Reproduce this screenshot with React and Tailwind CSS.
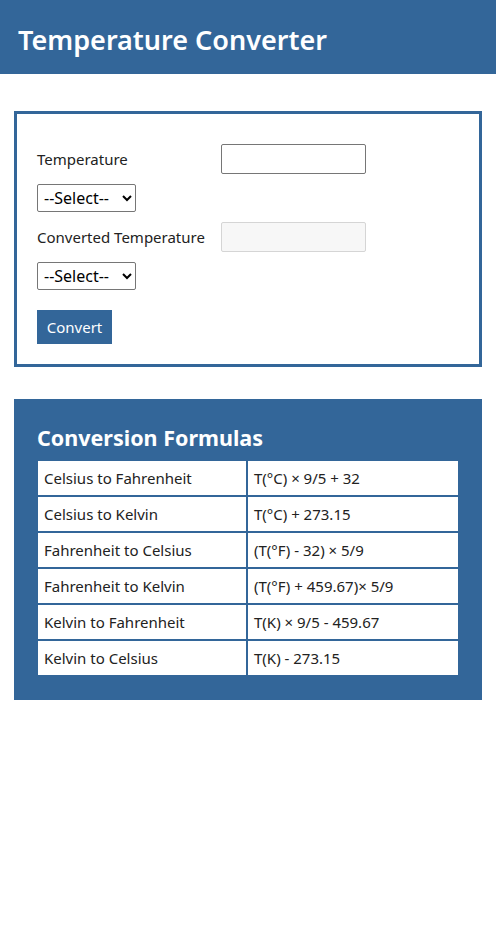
import React from 'react';

const formulas = [
  ['Celsius to Fahrenheit', 'T(°C) × 9/5 + 32'],
  ['Celsius to Kelvin', 'T(°C) + 273.15'],
  ['Fahrenheit to Celsius', '(T(°F) - 32) × 5/9'],
  ['Fahrenheit to Kelvin', '(T(°F) + 459.67)× 5/9'],
  ['Kelvin to Fahrenheit', 'T(K) × 9/5 - 459.67'],
  ['Kelvin to Celsius', 'T(K) - 273.15'],
];

const UnitSelect = () => (
  <select className="h-[28px] w-[99px] border border-[#767676] rounded-[2px] bg-white pl-[2px] text-[16px] text-black">
    <option>--Select--</option>
    <option>Celsius</option>
    <option>Fahrenheit</option>
    <option>Kelvin</option>
  </select>
);

export default function App() {
  return (
    <div className="min-h-[929px] bg-white text-[#222] font-['Noto_Sans','Open_Sans',sans-serif]">
      {/* Header */}
      <header className="h-[74px] bg-[#336699] flex items-center px-[18px] pt-[4px]">
        <h1 className="text-[27px] font-semibold text-white leading-none">Temperature Converter</h1>
      </header>

      {/* Converter form */}
      <div className="mx-[14px] mt-[37px] border-[3px] border-[#336699] pt-[30px] px-5 pb-5">
        <div className="flex items-center">
          <label className="w-[184px] text-[15px]">Temperature</label>
          <input type="text" className="h-[30px] w-[145px] border border-[#767676] rounded-[2px] bg-white" />
        </div>
        <div className="mt-[10px]">
          <UnitSelect />
        </div>
        <div className="flex items-center mt-[10px]">
          <label className="w-[184px] text-[15px]">Converted Temperature</label>
          <input type="text" disabled className="h-[30px] w-[145px] border border-[#d5d5d5] rounded-[2px] bg-[#f7f7f7]" />
        </div>
        <div className="mt-[10px]">
          <UnitSelect />
        </div>
        <button className="mt-5 h-[34px] w-[75px] bg-[#336699] text-white text-[15px]">Convert</button>
      </div>

      {/* Formulas */}
      <div className="mx-[14px] mt-8 bg-[#336699] pt-[23px] px-[22px] pb-[23px]">
        <h2 className="text-[21.5px] font-bold text-white leading-[32px] ml-[1px] mb-[5px]">Conversion Formulas</h2>
        <table className="border-separate border-spacing-[2px] w-[424px]">
          <tbody>
            {formulas.map(([name, f]) => (
              <tr key={name}>
                <td className="bg-white h-[34px] w-[208px] pl-[6px] text-[15px] text-[#222]">{name}</td>
                <td className="bg-white h-[34px] pl-[6px] text-[15px] text-[#222]">{f}</td>
              </tr>
            ))}
          </tbody>
        </table>
      </div>
    </div>
  );
}
